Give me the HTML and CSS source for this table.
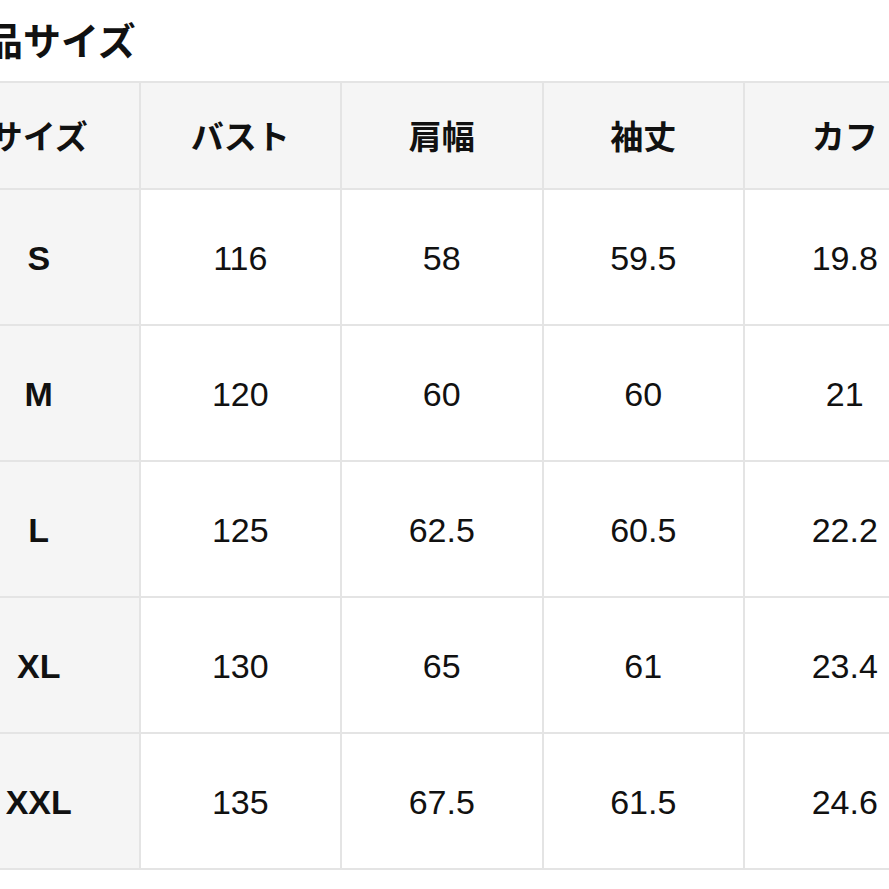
FILE: index.html
```html
<!DOCTYPE html>
<html lang="ja">
<head>
<meta charset="utf-8">
<link rel="stylesheet" href="styles.css">
</head>
<body>
<div class="page">
  <h2 class="title">商品サイズ</h2>
  <table class="size-table">
    <colgroup>
      <col class="c"><col class="c"><col class="c"><col class="c"><col class="c"><col class="c">
    </colgroup>
    <thead>
      <tr>
        <th>サイズ</th><th>バスト</th><th>肩幅</th><th>袖丈</th><th>カフ</th><th>着丈</th>
      </tr>
    </thead>
    <tbody>
      <tr><th>S</th><td>116</td><td>58</td><td>59.5</td><td>19.8</td><td>70</td></tr>
      <tr><th>M</th><td>120</td><td>60</td><td>60</td><td>21</td><td>72</td></tr>
      <tr><th>L</th><td>125</td><td>62.5</td><td>60.5</td><td>22.2</td><td>74</td></tr>
      <tr><th>XL</th><td>130</td><td>65</td><td>61</td><td>23.4</td><td>76</td></tr>
      <tr><th>XXL</th><td>135</td><td>67.5</td><td>61.5</td><td>24.6</td><td>78</td></tr>
    </tbody>
  </table>
</div>
</body>
</html>
```

FILE: styles.css
```css
html, body {
  margin: 0;
  padding: 0;
  background: #ffffff;
  overflow: hidden;
}
body {
  width: 889px;
  height: 889px;
  font-family: "Liberation Sans", "Noto Sans CJK JP", sans-serif;
  color: #111111;
}
.page {
  margin-left: -63px;
  width: 1300px;
}
.title {
  margin: 0;
  padding: 17px 0 0 10px;
  height: 62px;
  font-family: "Noto Sans CJK JP", sans-serif;
  font-size: 38px;
  font-weight: 700;
  line-height: 44px;
  box-sizing: border-box;
}
.size-table {
  border-collapse: collapse;
  table-layout: fixed;
  width: 1209px;
  margin-top: 19px;
}
.c {
  width: 201.5px;
}
.size-table th,
.size-table td {
  border: 2px solid #e4e4e4;
  text-align: center;
  vertical-align: middle;
  padding: 0;
}
.size-table thead th {
  height: 107px;
  padding-bottom: 2px;
  box-sizing: border-box;
  background: #f5f5f5;
  font-family: "Noto Sans CJK JP", sans-serif;
  font-size: 33px;
  font-weight: 700;
  line-height: 40px;
}
.size-table tbody th,
.size-table tbody td {
  height: 132px;
  font-size: 34px;
  padding-top: 2px;
}
.size-table tbody th {
  background: #f5f5f5;
  font-weight: 700;
}
.size-table tbody td {
  font-weight: 400;
}
```
